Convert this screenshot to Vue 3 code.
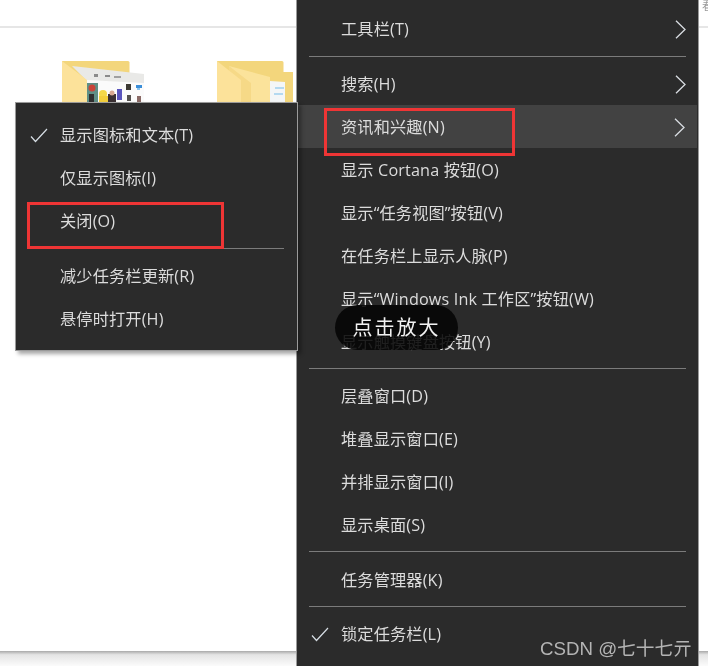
<script setup>
const mainSections = [
  [{ t: '工具栏(T)', arrow: true }],
  [
    { t: '搜索(H)', arrow: true },
    { t: '资讯和兴趣(N)', arrow: true, hover: true },
    { t: '显示 Cortana 按钮(O)' },
    { t: '显示“任务视图”按钮(V)' },
    { t: '在任务栏上显示人脉(P)' },
    { t: '显示“Windows Ink 工作区”按钮(W)' },
    { t: '显示触摸键盘按钮(Y)' },
  ],
  [
    { t: '层叠窗口(D)' },
    { t: '堆叠显示窗口(E)' },
    { t: '并排显示窗口(I)' },
    { t: '显示桌面(S)' },
  ],
  [{ t: '任务管理器(K)' }],
  [{ t: '锁定任务栏(L)', check: true }],
]
const subSections = [
  [
    { t: '显示图标和文本(T)', check: true },
    { t: '仅显示图标(I)' },
    { t: '关闭(O)' },
  ],
  [{ t: '减少任务栏更新(R)' }, { t: '悬停时打开(H)' }],
]
</script>

<template>
  <div class="stage">
    <div class="topline"></div>
    <div class="bottomband"></div>

    <svg class="folder folder-a" width="84" height="42" viewBox="0 0 84 42">
      <path d="M0 0H66a1.500 1.500 0 0 1 1.500 1.500V42H0Z" fill="#f3d67c" />
      <path d="M10 5 82 13V42H25V20Z" fill="#e9e9e7" />
      <path d="M25 19 82 22V42H25Z" fill="#fbfbfb" />
      <path d="M0 0 25 19V42H0Z" fill="#fce29a" />
      <rect x="25" y="22" width="11" height="20" fill="#5f8f86" />
      <circle cx="30" cy="27" r="3.500" fill="#c9443a" />
      <rect x="27" y="33" width="5" height="9" fill="#2f2f2f" />
      <circle cx="41" cy="33" r="4" fill="#f4d94a" />
      <rect x="37" y="35" width="9" height="7" fill="#f2cf3c" />
      <rect x="46" y="33" width="8" height="9" fill="#3a3033" />
      <circle cx="50" cy="32" r="2.500" fill="#d8a893" />
      <rect x="55" y="28" width="5" height="11" fill="#5a55bd" />
      <rect x="64" y="23" width="5" height="6" fill="#3d3a34" />
      <rect x="74" y="24" width="6" height="3" fill="#3b8fd9" />
      <rect x="75" y="27" width="3" height="2" fill="#8cc2ea" />
      <rect x="65" y="34" width="4" height="6" fill="#55524f" />
      <rect x="75" y="35" width="4" height="6" fill="#8a6a66" />
      <rect x="32" y="13" width="4" height="3" fill="#8a8a8a" />
      <rect x="43" y="14" width="5" height="2" fill="#8a8a8a" />
      <rect x="52" y="15" width="7" height="2" fill="#a0a0a0" />
    </svg>

    <svg class="folder folder-b" width="76" height="42" viewBox="0 0 76 42">
      <path d="M0 0H65a1.500 1.500 0 0 1 1.500 1.500V11H76V42H0Z" fill="#f3d67c" />
      <path d="M53 20 68 21V42H53Z" fill="#f4f6f7" />
      <path d="M58 27H67M57 33H66" stroke="#9fd0ee" stroke-width="1.500" />
      <path d="M12 5 53 16V42H12Z" fill="#fbe39b" />
      <path d="M12 5 34 22V42H12Z" fill="#f6d987" />
      <path d="M0 0 24 19V42H0Z" fill="#fce29a" />
    </svg>

    <div class="tiny">看</div>

    <section class="menu main-menu">
      <template v-for="(section, i) in mainSections" :key="i">
        <hr v-if="i" class="sep" />
        <div
          v-for="item in section"
          :key="item.t"
          class="row"
          :class="{ hover: item.hover }"
        >
          <svg v-if="item.check" class="check" width="18" height="15" viewBox="0 0 18 15">
            <path d="M1 8.500 5.500 13.500 17 1" fill="none" stroke="#d6dde4" stroke-width="1.200" />
          </svg>
          <span>{{ item.t }}</span>
          <svg v-if="item.arrow" class="chevron" width="11" height="19" viewBox="0 0 11 19">
            <path d="M1 .7 10 9.500 1 18.300" fill="none" stroke="#d9dde2" stroke-width="1.300" />
          </svg>
        </div>
      </template>
    </section>

    <section class="menu sub-menu">
      <template v-for="(section, i) in subSections" :key="i">
        <hr v-if="i" class="sep" />
        <div v-for="item in section" :key="item.t" class="row">
          <svg v-if="item.check" class="check" width="18" height="15" viewBox="0 0 18 15">
            <path d="M1 8.500 5.500 13.500 17 1" fill="none" stroke="#d6dde4" stroke-width="1.200" />
          </svg>
          <span>{{ item.t }}</span>
        </div>
      </template>
    </section>

    <div class="mark mark-news"></div>
    <div class="mark mark-close"></div>
    <div class="tip">点击放大</div>
    <div class="watermark">CSDN @七十七亓</div>
  </div>
</template>

<style scoped>
.stage {
  position: relative;
  width: 708px;
  height: 669px;
  overflow: hidden;
  background: #fff;
  font-family: "Open Sans", "Noto Sans CJK SC", sans-serif;
  filter: blur(0.35px);
}
.topline {
  position: absolute;
  left: 0;
  right: 0;
  top: 26px;
  height: 2px;
  background: #e6e6e6;
}
.bottomband {
  position: absolute;
  left: 0;
  right: 0;
  top: 651px;
  height: 15px;
  background: linear-gradient(#a9a9a9, #e4e4e4 25%, #fbfbfb);
}
.folder {
  position: absolute;
  top: 61px;
}
.folder-a {
  left: 62px;
}
.folder-b {
  left: 217px;
}
.tiny {
  position: absolute;
  left: 702px;
  top: 0;
  font-size: 11px;
  line-height: 12px;
  color: #9a9a9a;
}
.menu {
  position: absolute;
  box-sizing: border-box;
  background: #2b2b2b;
  border: 1px solid #9a9a9a;
  color: #dcdcdc;
  font-size: 16.200px;
  letter-spacing: 0.150px;
}
.main-menu {
  left: 296px;
  top: -1px;
  width: 403px;
  height: 667px;
  padding-top: 8px;
  border-bottom: 0;
}
.sub-menu {
  left: 15px;
  top: 102px;
  width: 283px;
  height: 249px;
  padding-top: 11px;
  box-shadow: 3px 3px 4px rgba(0, 0, 0, 0.35);
}
.row {
  position: relative;
  display: flex;
  align-items: center;
  box-sizing: border-box;
  height: 43px;
  padding-left: 44px;
  line-height: 43px;
  white-space: nowrap;
}
.main-menu .row {
  padding-top: 2px;
}
.main-menu .row:first-child {
  padding-top: 0;
}
.hover {
  background: #424242;
  margin-right: 1px;
}
.sep {
  height: 1px;
  margin: 5px 12px 5.500px;
  border: 0;
  background: #7b7b7b;
}
.main-menu .sep:first-of-type {
  margin-bottom: 4.500px;
}
.sub-menu .sep {
  margin-right: 13px;
}
.check {
  position: absolute;
  left: 14px;
  top: 14px;
}
.main-menu .check {
  top: 15px;
}
.chevron {
  position: absolute;
  right: 12px;
  top: 13px;
}
.main-menu .row:first-child .chevron {
  top: 12px;
}
.mark {
  position: absolute;
  box-sizing: border-box;
  border: 3px solid #ef3535;
}
.mark-news {
  left: 324px;
  top: 108px;
  width: 191px;
  height: 48px;
}
.mark-close {
  left: 27px;
  top: 202px;
  width: 197px;
  height: 47px;
}
.tip {
  position: absolute;
  left: 335px;
  top: 305px;
  width: 123px;
  height: 45px;
  border-radius: 23px;
  background: rgba(5, 5, 5, 0.88);
  color: #f2f2f2;
  font-size: 20px;
  line-height: 45px;
  text-align: center;
  letter-spacing: 2px;
}
.watermark {
  position: absolute;
  left: 540px;
  top: 636px;
  color: #b4b4b4;
  font-family: "Liberation Sans", "Noto Sans CJK SC", sans-serif;
  font-size: 18.700px;
  line-height: 26px;
  white-space: nowrap;
}
</style>
